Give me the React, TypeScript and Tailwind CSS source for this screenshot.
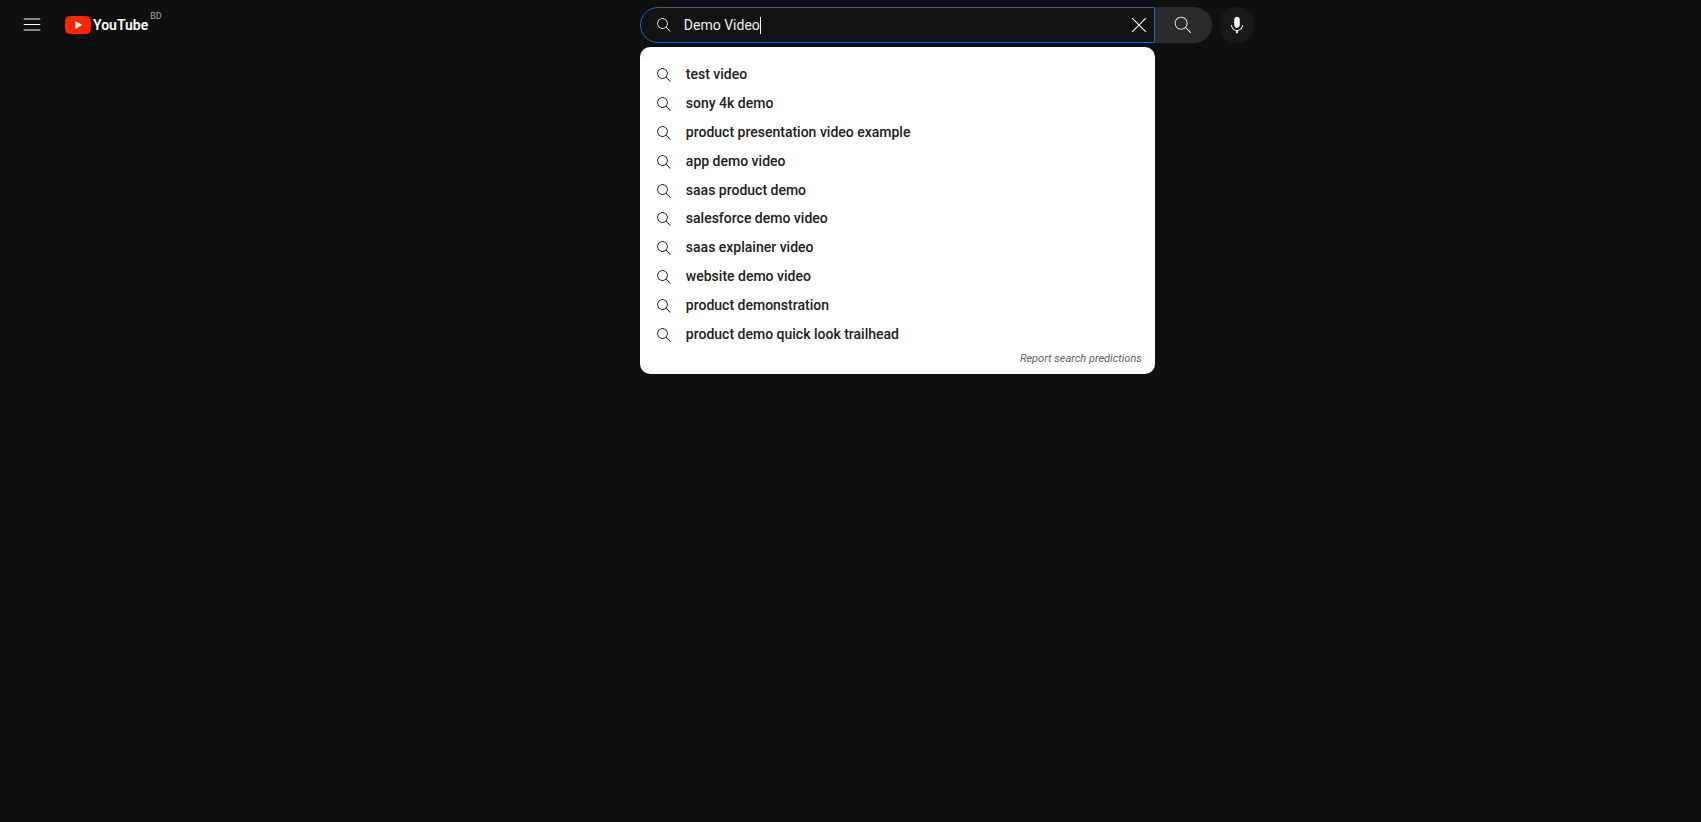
import { useState } from 'react'

const SUGGESTIONS = [
  'test video',
  'sony 4k demo',
  'product presentation video example',
  'app demo video',
  'saas product demo',
  'salesforce demo video',
  'saas explainer video',
  'website demo video',
  'product demonstration',
  'product demo quick look trailhead',
]

interface IconProps {
  d: string
  className: string
}

function Icon({ d, className }: IconProps) {
  return (
    <svg viewBox="0 0 24 24" fill="currentColor" aria-hidden="true" className={className}>
      <path d={d} />
    </svg>
  )
}

const icons = {
  menu: 'M21 6H3V5h18v1zm0 5H3v1h18v-1zm0 6H3v1h18v-1z',
  search:
    'M20.87 20.17l-5.59-5.59C16.35 13.35 17 11.75 17 10c0-3.87-3.13-7-7-7s-7 3.13-7 7 3.13 7 7 7c1.75 0 3.35-.65 4.58-1.71l5.59 5.59.7-.71zM10 16c-3.31 0-6-2.69-6-6s2.69-6 6-6 6 2.69 6 6-2.69 6-6 6z',
  close:
    'M12.85 12l7.85 7.85-.85.85L12 12.85 4.15 20.7l-.85-.85L11.15 12 3.3 4.15l.85-.85L12 11.15l7.85-7.85.85.85z',
  mic: 'M12 3c-1.66 0-3 1.37-3 3.07v5.86c0 1.7 1.34 3.07 3 3.07s3-1.37 3-3.07V6.07C15 4.37 13.66 3 12 3zm6.5 9h-1c0 3.03-2.47 5.5-5.5 5.5S6.5 15.03 6.5 12h-1c0 3.24 2.39 5.93 5.5 6.41V21h2v-2.59c3.11-.48 5.5-3.17 5.5-6.41z',
}

function Logo() {
  return (
    <a href="#" aria-label="YouTube Home" className="flex items-center">
      <svg viewBox="0 0 26 18" className="h-[18px] w-[26px]" aria-hidden="true">
        <path
          fill="#ff2600"
          d="M25.4 2.8A3.3 3.3 0 0 0 23.1.5C21.1 0 13 0 13 0S4.9 0 2.9.5A3.3 3.3 0 0 0 .6 2.8C0 4.8 0 9 0 9s0 4.2.6 6.2a3.3 3.3 0 0 0 2.3 2.3c2 .5 10.1.5 10.1.5s8.1 0 10.1-.5a3.3 3.3 0 0 0 2.3-2.3C26 13.2 26 9 26 9s0-4.2-.6-6.2z"
        />
        <path fill="#fff" d="M10.4 5.1v7.8L17.1 9z" />
      </svg>
      <span className="ml-[2px] text-[14px] leading-[18px] font-semibold text-white">YouTube</span>
      <span className="-mt-1 ml-[2px] self-start text-[9px] leading-none text-[#aaa]">BD</span>
    </a>
  )
}

interface SearchBoxProps {
  query: string
  setQuery: (value: string) => void
}

function SearchBox({ query, setQuery }: SearchBoxProps) {
  return (
    <div className="relative min-w-0 flex-1">
      <div className="flex h-9 items-center rounded-l-full border border-[#1c65be] bg-[#121212] pr-1 pl-[14px]">
        <Icon d={icons.search} className="mr-[11px] size-[18px] shrink-0 text-white" />
        <div className="relative min-w-0 flex-1">
          <input
            type="text"
            aria-label="Search"
            value={query}
            onChange={(e) => setQuery(e.target.value)}
            className="block w-full bg-transparent text-[14px] leading-[20px] text-[#eee] caret-transparent outline-none"
          />
          {/* caret sits right after the typed text */}
          <span
            aria-hidden="true"
            className="pointer-events-none absolute top-[2px] left-0 h-[17px] border-r border-white text-[14px] leading-[17px] whitespace-pre text-transparent select-none"
          >
            {query}
          </span>
        </div>
        <button type="button" aria-label="Clear" onClick={() => setQuery('')} className="p-px text-white">
          <Icon d={icons.close} className="size-5" />
        </button>
      </div>

      <div className="absolute inset-x-0 top-10 rounded-[10px] bg-white pt-[13px] pb-[7px] text-[#212121]">
        <ul className="grid h-[288px] auto-rows-fr">
          {SUGGESTIONS.map((text) => (
            <li key={text} className="flex">
              <button
                type="button"
                onClick={() => setQuery(text)}
                className="flex w-full items-center gap-[13px] px-[15px] text-left text-[14px] leading-5 font-medium"
              >
                <Icon d={icons.search} className="mt-[2px] size-[18px] shrink-0 text-black" />
                {text}
              </button>
            </li>
          ))}
        </ul>
        <div className="mt-[3px] flex justify-end pr-[13px]">
          <a href="#" className="text-[11px] leading-4 text-[#606060] italic">
            Report search predictions
          </a>
        </div>
      </div>
    </div>
  )
}

export default function App() {
  const [query, setQuery] = useState('Demo Video')

  return (
    <div className="min-h-screen bg-[#0f0f0f] font-['Roboto',sans-serif]">
      <header className="flex h-[50px] items-center">
        <div className="mr-8 flex items-center pl-[21px]">
          <button type="button" aria-label="Guide" className="mr-[22px] text-white">
            <Icon d={icons.menu} className="size-[22px]" />
          </button>
          <Logo />
        </div>

        <form
          className="mx-auto flex max-w-[615px] flex-1 items-center"
          onSubmit={(e) => e.preventDefault()}
        >
          <SearchBox query={query} setQuery={setQuery} />
          <button
            type="submit"
            aria-label="Search"
            className="flex h-9 w-[57px] items-center justify-center rounded-r-full bg-[#2b2b2b] text-[#eee]"
          >
            <Icon d={icons.search} className="size-[22px]" />
          </button>
          <button
            type="button"
            aria-label="Search with your voice"
            className="ml-[7px] flex size-9 items-center justify-center rounded-full bg-[#181818] text-white"
          >
            <Icon d={icons.mic} className="size-[22px]" />
          </button>
        </form>
      </header>
    </div>
  )
}
